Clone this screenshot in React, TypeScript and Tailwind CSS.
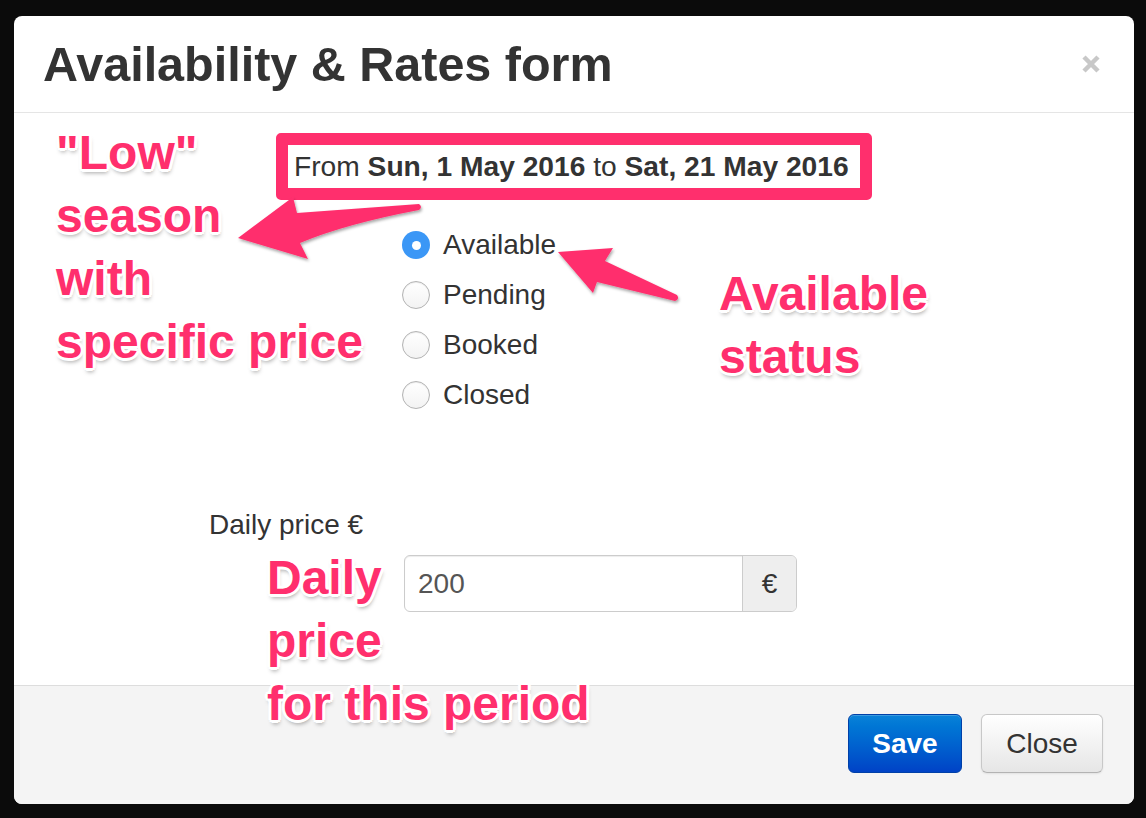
import React from "react";

const ann =
  "absolute font-bold text-[48px] leading-[63px] text-[#ff2f6d] whitespace-nowrap [text-shadow:3px_0_0_#fff,-3px_0_0_#fff,0_3px_0_#fff,0_-3px_0_#fff,2px_2px_0_#fff,-2px_2px_0_#fff,2px_-2px_0_#fff,-2px_-2px_0_#fff,1px_4px_4px_rgba(0,0,0,0.35)]";

const statuses = ["Available", "Pending", "Booked", "Closed"];

const Radio = ({ checked }: { checked: boolean }) =>
  checked ? (
    <span className="w-[28px] h-[28px] rounded-full bg-[#3b97f6] flex items-center justify-center shrink-0">
      <span className="w-[9px] h-[9px] rounded-full bg-white" />
    </span>
  ) : (
    <span className="w-[28px] h-[28px] rounded-full border border-[#b3b3b3] bg-gradient-to-b from-white to-[#f3f3f3] shadow-[inset_0_1px_1px_rgba(0,0,0,0.08)] shrink-0" />
  );

const App = (): JSX.Element => {
  return (
    <div className="relative w-[1146px] h-[818px] bg-[#0b0b0b] overflow-hidden pt-[16px] pl-[14px] font-['Liberation_Sans',Arial,sans-serif]">
      {/* modal */}
      <div className="w-[1120px] h-[788px] bg-white rounded-[8px] overflow-hidden flex flex-col">
        <div className="h-[97px] shrink-0 border-b border-[#e5e5e5] flex items-center justify-between pl-[29px] pr-[34px]">
          <h3 className="text-[48.5px] font-bold text-[#333] leading-none">Availability &amp; Rates form</h3>
          <svg width="18" height="18" viewBox="0 0 18 18">
            <path d="M2 2L16 16M16 2L2 16" stroke="#c8c8c8" strokeWidth="4.5" />
          </svg>
        </div>

        <div className="h-[572px] shrink-0 flex flex-col text-[28px] text-[#333]">
          <div className="mt-[20px] ml-[262px] self-start border-[12px] border-[#ff2f6d] rounded-[5px] pl-[6px] pr-[11px] h-[67px] flex items-center">
            <span className="leading-none text-[28.2px]">
              From <b>Sun, 1 May 2016</b> to <b>Sat, 21 May 2016</b>
            </span>
          </div>

          <div className="mt-[20px] ml-[388px] flex flex-col">
            {statuses.map((s, i) => (
              <label key={s} className="h-[50px] flex items-center gap-[13px]">
                <Radio checked={i === 0} />
                <span className="leading-none">{s}</span>
              </label>
            ))}
          </div>

          <div className="mt-[88px] ml-[195px] h-[34px] leading-[34px]">Daily price €</div>

          <div className="mt-[13px] ml-[390px] w-[393px] h-[57px] flex border border-[#cccccc] rounded-[6px] overflow-hidden shadow-[inset_0_1px_1px_rgba(0,0,0,0.075)]">
            <div className="flex-1 flex items-center pl-[13px] text-[#555]">200</div>
            <div className="w-[54px] bg-[#eeeeee] border-l border-[#cccccc] flex items-center justify-center">€</div>
          </div>
        </div>

        <div className="flex-1 border-t border-[#dddddd] bg-[#f4f4f4] flex justify-end items-start gap-[19px] pt-[28px] pr-[31px]">
          <button
            type="button"
            className="w-[114px] h-[59px] rounded-[6px] border border-[#0040a8] bg-gradient-to-b from-[#0a82d8] to-[#0042c6] text-white font-bold text-[28px] shadow-[inset_0_1px_0_rgba(255,255,255,0.2)]"
          >
            Save
          </button>
          <button
            type="button"
            className="w-[122px] h-[59px] rounded-[6px] border border-[#c8c8c8] border-b-[#b3b3b3] bg-gradient-to-b from-white to-[#e6e6e6] text-[#333] text-[28px] shadow-[0_1px_2px_rgba(0,0,0,0.08)]"
          >
            Close
          </button>
        </div>
      </div>

      {/* annotation arrows */}
      <svg className="absolute left-0 top-0 pointer-events-none" width="1146" height="818">
        <defs>
          <filter id="sh" x="-20%" y="-20%" width="140%" height="140%">
            <feDropShadow dx="1" dy="2" stdDeviation="1.5" floodColor="#000" floodOpacity="0.35" />
          </filter>
        </defs>
        <path
          d="M419 204 L297 213 L293 197 L238 238 L308 259 L300 243 Q345 224 419 210 Q423 207 419 204 Z"
          fill="#ff2f6d"
          filter="url(#sh)"
        />
        <path
          d="M558 252 L613 248 L605 261 L677 295 Q680 299 675 301 L597 282 L593 293 Z"
          fill="#ff2f6d"
          filter="url(#sh)"
        />
      </svg>

      {/* annotation labels */}
      <div className={ann + " left-[56px] top-[121px]"}>
        "Low"
        <br />
        season
        <br />
        with
        <br />
        specific price
      </div>
      <div className={ann + " left-[719px] top-[262px]"}>
        Available
        <br />
        status
      </div>
      <div className={ann + " left-[267px] top-[546px]"}>
        Daily
        <br />
        price
        <br />
        for this period
      </div>
    </div>
  );
};

export default App;
